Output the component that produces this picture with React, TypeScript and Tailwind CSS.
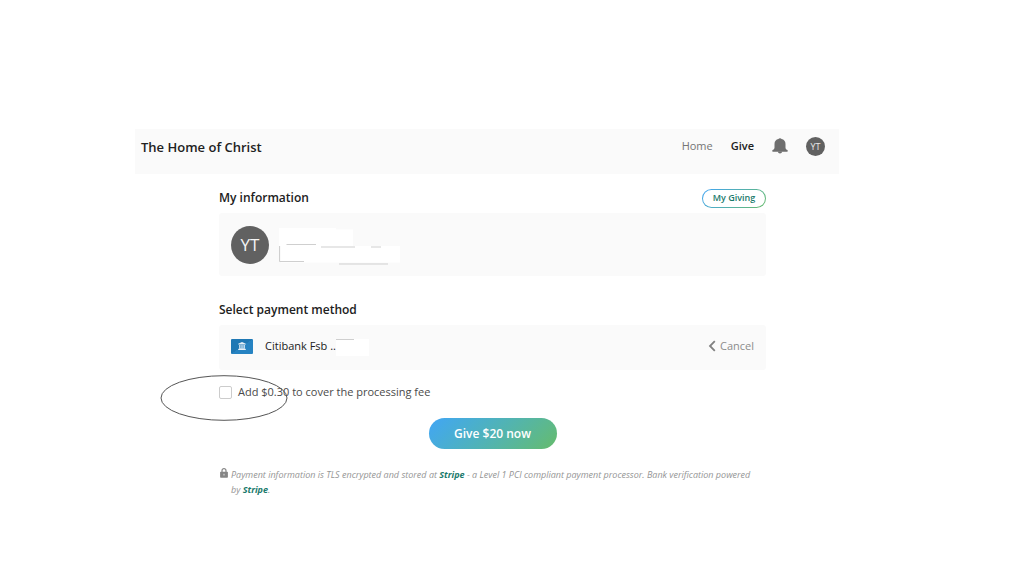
import { useState } from "react";

const BellIcon = () => (
  <svg viewBox="0 0 16 16" className="size-4" fill="#6e6e6e" aria-hidden="true">
    <path d="M8 .3c.8 0 1.300.3 1.500.8 2.500.5 4 2.300 4 4.900v3.400c0 1.100.4 1.700 1.500 2.400.5.3.8.7.8 1.200 0 .4-.3.7-.8.7H1c-.5 0-.8-.3-.8-.7 0-.5.3-.9.8-1.200 1.100-.7 1.500-1.300 1.500-2.400V6c0-2.600 1.500-4.400 4-4.900C6.700.6 7.200.3 8 .3Z" />
    <path d="M5.800 13.500h4.400c-.2 1.300-1.100 2-2.200 2s-2-.7-2.200-2Z" />
  </svg>
);

const LockIcon = () => (
  <svg viewBox="0 0 8 10" className="mt-px h-[10px] w-2 shrink-0" aria-hidden="true">
    <path d="M2 4.500V2.700a2 2 0 0 1 4 0v1.800" fill="none" stroke="#858585" strokeWidth="1.200" />
    <rect x=".1" y="3.700" width="7.800" height="6" rx=".7" fill="#858585" />
    <path d="M4 5.800v1.700" stroke="#e5e5e5" strokeWidth="1" />
  </svg>
);

const BankIcon = () => (
  <svg viewBox="0 0 8 8" className="size-2" fill="#e6f0f7" aria-hidden="true">
    <path d="M4 0 7.800 1.800v.8H.2v-.8L4 0ZM1.200 3h1.300v3H1.200zM3.400 3h1.200v3H3.400zM5.500 3h1.300v3H5.500zM.8 6.100h6.400v.7H.8zM.2 7h7.600v1H.2z" />
  </svg>
);

// white blocks that hide the donor's name and email
const HiddenContact = () => (
  <svg viewBox="0 0 124 40" className="h-10 w-[124px]" aria-hidden="true">
    <path d="M0 3h57v1.500h17V21H0z M2 21h119v16.500H2z" fill="#fff" />
    <path d="M7.500 19.500H37M42 22H76M92 22H102M.5 21V36.500H25M60 39H109" fill="none" stroke="#cfcfcf" />
  </svg>
);

const HiddenDigits = () => (
  <svg viewBox="0 0 34 22" className="h-[22px] w-[34px]" aria-hidden="true">
    <path d="M0 4h33v17H0z" fill="#fff" />
    <path d="M0 4.500H18" stroke="#cfcfcf" />
  </svg>
);

export default function App() {
  const [coverFee, setCoverFee] = useState(false);

  return (
    <div className="min-h-screen bg-white pt-[129px] pr-[185px] pl-[135px] font-['Open_Sans','Noto_Sans',sans-serif] text-[#212121]">
      <header className="flex h-[45px] items-start justify-between bg-[#fafafa] pr-[14px] pl-[6px]">
        <h1 className="pt-2 text-[13px] leading-5 font-semibold">The Home of Christ</h1>
        <nav className="flex items-center pt-[7px] text-[11px] leading-5">
          <a href="#home" className="text-[#757575]">Home</a>
          <a href="#give" className="ml-[18px] font-semibold">Give</a>
          <button type="button" aria-label="Notifications" className="ml-[18px]">
            <BellIcon />
          </button>
          <button type="button" className="ml-[18px] size-[19px] rounded-full bg-[#616161] text-[9px] leading-[19px] text-[#e8e8e8]">YT</button>
        </nav>
      </header>

      <main className="pt-[14px] pr-[73px] pl-[84px]">
        <div className="flex items-center justify-between">
          <h2 className="text-[12px] leading-5 font-semibold">My information</h2>
          <button type="button" className="h-[19px] w-16 rounded-full border border-transparent [background:linear-gradient(#fff,#fff)_padding-box,linear-gradient(135deg,#42a5f5,#66bb6a)_border-box] text-[9px] leading-4 font-semibold text-[#1b7a6c]">
            My Giving
          </button>
        </div>
        <section className="mt-[5px] flex h-[63px] items-center rounded-[3px] bg-[#fafafa] pl-3">
          <div className="size-[38px] rounded-full bg-[#616161] text-center text-[17px] leading-[38px] text-[#f5f5f5]">YT</div>
          <div className="ml-[10px]">
            <HiddenContact />
          </div>
        </section>

        <h2 className="mt-6 text-[12px] leading-5 font-semibold">Select payment method</h2>
        <section className="mt-[5px] flex h-[45px] items-center rounded-[3px] bg-[#fafafa] px-3 pb-[3px]">
          <span className="flex h-[15px] w-[22px] items-center justify-center rounded-[1px] bg-linear-to-br from-[#1f78b4] from-50% to-[#2683c2] to-50%">
            <BankIcon />
          </span>
          <span className="ml-3 text-[11px] leading-5 font-medium">Citibank Fsb ..</span>
          <HiddenDigits />
          <button type="button" className="ml-auto flex items-center gap-1 text-[11px] leading-5 text-[#8c8c8c]">
            <svg viewBox="0 0 8 12" className="h-3 w-2" aria-hidden="true">
              <path d="M6.800 1.200 2 6l4.800 4.800" fill="none" stroke="#808080" strokeWidth="1.800" />
            </svg>
            Cancel
          </button>
        </section>

        <div className="relative mt-3 flex items-center">
          <input
            id="cover-fee"
            type="checkbox"
            checked={coverFee}
            onChange={(e) => setCoverFee(e.target.checked)}
            className="size-[13px] appearance-none rounded-[2px] border border-[#cccccc] bg-white checked:bg-[#1b7a6c]"
          />
          <label htmlFor="cover-fee" className="ml-[6px] text-[11px] leading-5 text-[#4a4a4a]">
            Add $0.30 to cover the processing fee
          </label>
          <svg viewBox="0 0 128 46" className="pointer-events-none absolute -top-[7px] -left-[59px] h-[46px] w-32" aria-hidden="true">
            <ellipse cx="64" cy="23" rx="63" ry="22.300" fill="none" stroke="#555" />
          </svg>
        </div>

        <div className="mt-4 flex justify-center">
          <button type="button" className="h-[31px] w-32 rounded-full bg-linear-135 from-[#42a5f5] to-[#66bb6a] text-[12px] font-semibold text-white">
            Give $20 now
          </button>
        </div>

        <div className="mt-[18px] flex gap-[3px] pr-2 pl-px">
          <LockIcon />
          <p className="text-[9px] leading-[15px] text-[#959595] italic">
            Payment information is TLS encrypted and stored at{" "}
            <a href="#stripe" className="font-bold text-[#1b7a6c]">Stripe</a> - a Level 1 PCI compliant payment processor. Bank verification powered by{" "}
            <a href="#stripe" className="font-bold text-[#1b7a6c]">Stripe</a>.
          </p>
        </div>
      </main>
    </div>
  );
}
